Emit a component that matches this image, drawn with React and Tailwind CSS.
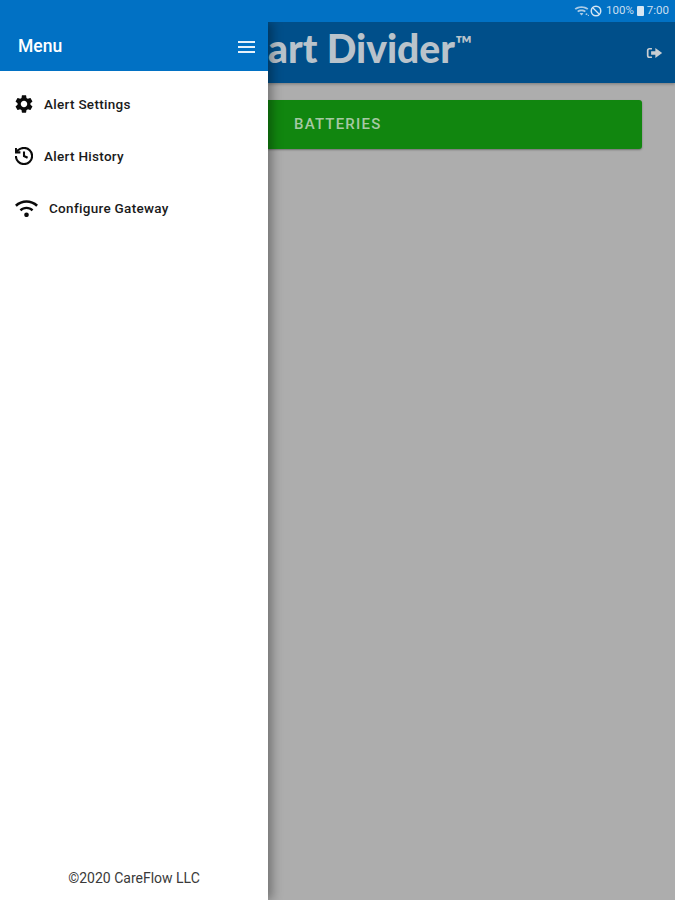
import React from "react";

const menuItems = [
    { name: "Alert Settings", icon: "gear", pad: "pl-[15px] gap-[11px]" },
    { name: "Alert History", icon: "history", pad: "pl-[15px] gap-[11px]" },
    { name: "Configure Gateway", icon: "wifi", pad: "pl-[15px] gap-[11px]" },
];

const MenuIcon = ({ type }) => {
    if (type === "gear") {
        return (
            <svg viewBox="2 2 20 20" className="w-[18px] h-[18px]" fill="#0a0a0a">
                <path d="M19.14 12.94c.04-.3.06-.61.06-.94 0-.32-.02-.64-.07-.94l2.03-1.58c.18-.14.23-.41.12-.61l-1.92-3.32c-.12-.22-.37-.29-.59-.22l-2.39.96c-.5-.38-1.03-.7-1.62-.94l-.36-2.54c-.04-.24-.24-.41-.48-.41h-3.84c-.24 0-.43.17-.47.41l-.36 2.54c-.59.24-1.13.57-1.62.94l-2.39-.96c-.22-.08-.47 0-.59.22L2.74 8.87c-.12.21-.08.47.12.61l2.03 1.58c-.05.3-.09.63-.09.94s.02.64.07.94l-2.03 1.58c-.18.14-.23.41-.12.61l1.92 3.32c.12.22.37.29.59.22l2.39-.96c.5.38 1.03.7 1.62.94l.36 2.54c.05.24.24.41.48.41h3.84c.24 0 .44-.17.47-.41l.36-2.54c.59-.24 1.13-.56 1.62-.94l2.39.96c.22.08.47 0 .59-.22l1.92-3.32c.12-.22.07-.47-.12-.61l-2.01-1.58zM12 15.6c-1.98 0-3.6-1.62-3.6-3.6s1.62-3.6 3.6-3.6 3.6 1.62 3.6 3.6-1.62 3.6-3.6 3.6z" />
            </svg>
        );
    }
    if (type === "history") {
        return (
            <svg viewBox="2 2 20 20" className="w-[18px] h-[18px]" fill="none" stroke="#0a0a0a" strokeWidth="2.3">
                <path d="M3 12a9 9 0 1 0 9-9 9.75 9.75 0 0 0-6.74 2.74L3 8" />
                <path d="M3 3v5h5" />
                <path d="M12 7v5l4 2" />
            </svg>
        );
    }
    return (
        <svg viewBox="1 4 22 17" className="w-[23px] h-[18px]" fill="#0a0a0a">
            <path d="M1 9.5l1.7 1.7c5.2-5 13.4-5 18.6 0L23 9.5C16.9 3.7 7.1 3.7 1 9.5z" />
            <path d="M5.4 13.9l1.7 1.7c2.8-2.7 7-2.7 9.8 0l1.7-1.7c-3.7-3.5-9.5-3.5-13.2 0z" />
            <circle cx="12" cy="19" r="2.2" />
        </svg>
    );
};

const StatusBar = () => (
    <div className="relative z-20 h-[22px] bg-[#0171c4] flex items-center justify-end pr-[6px] text-[#c9dff0] text-[11.5px]">
        {/* wifi with small activity dots */}
        <svg viewBox="0 0 24 18" className="w-[15px] h-[12px] mr-[1px]" fill="#a9cbe6">
            <path d="M1 5c6-5 16-5 22 0l-2 2C16 3 8 3 3 7z" />
            <path d="M5 9c4-3 10-3 14 0l-2 2c-3-2-7-2-10 0z" />
            <path d="M9 13c2-1 4-1 6 0l-3 3z" />
            <circle cx="20" cy="14" r="1.5" />
            <circle cx="23" cy="16" r="1" />
        </svg>
        <svg viewBox="0 0 24 24" className="w-[12px] h-[12px] mr-[4px]" fill="none" stroke="#d5e6f3" strokeWidth="3">
            <circle cx="12" cy="12" r="9.5" />
            <path d="M5 5l14 14" strokeWidth="2.5" />
        </svg>
        <span>100%</span>
        <div className="w-[7px] h-[10px] bg-[#d5e6f3] rounded-[1px] ml-[3px] mr-[3px]"></div>
        <span>7:00</span>
    </div>
);

const App = () => {
    return (
        <div className="w-[675px] h-[900px] overflow-hidden flex flex-col font-['Roboto',sans-serif]">
            <StatusBar />
            <div className="flex flex-grow min-h-0">
                {/* Drawer */}
                <aside className="relative z-10 w-[268px] shrink-0 bg-white flex flex-col shadow-[4px_0_10px_rgba(0,0,0,0.35)]">
                    <div className="h-[49px] bg-[#0171c4] flex items-center justify-between pl-[18px] pr-[13px] text-white">
                        <span className="text-[17.5px] font-medium">Menu</span>
                        <div className="w-[17px] flex flex-col gap-[3px]">
                            <div className="h-[2px] bg-[#e6f1fa]"></div>
                            <div className="h-[2px] bg-[#e6f1fa]"></div>
                            <div className="h-[2px] bg-[#e6f1fa]"></div>
                        </div>
                    </div>
                    <nav className="flex flex-col pt-[7px] flex-grow">
                        {menuItems.map((item) => (
                            <div key={item.name} className={`h-[52px] flex items-center ${item.pad}`}>
                                <MenuIcon type={item.icon} />
                                <span className="text-[13.5px] font-medium text-[#1a1a1a] tracking-[0.3px]">{item.name}</span>
                            </div>
                        ))}
                    </nav>
                    <div className="h-[32px] text-center text-[14px] text-[#3a3a3a]">
                        ©2020 CareFlow LLC
                    </div>
                </aside>

                {/* Main content, dimmed behind the drawer */}
                <main className="flex-grow min-w-0 bg-[#adadad] flex flex-col">
                    <header className="h-[61px] bg-[#004f8a] flex items-center justify-between pr-[12px] shadow-[0_1px_3px_rgba(0,0,0,0.3)]">
                        <span className="whitespace-nowrap font-['Lato',sans-serif] font-black text-[39px] leading-[44px] text-[#b9c3cb] pb-[9px]">
                            art Divider<span className="text-[22px] font-bold leading-none align-[11px]">™</span>
                        </span>
                        <svg viewBox="0 0 20 16" className="w-[17px] h-[14px]" fill="#c9ced2">
                            <path d="M7 2H4a3 3 0 0 0-3 3v6a3 3 0 0 0 3 3h3v-2H4a1 1 0 0 1-1-1V5a1 1 0 0 1 1-1h3z" />
                            <path d="M11 2l8 6-8 6v-4H6V6h5z" />
                        </svg>
                    </header>
                    <div className="pt-[17px] pr-[33px]">
                        <div className="h-[49px] bg-[#11860f] rounded-r-[3px] flex items-center pl-[26px] shadow-[0_1px_2px_rgba(0,0,0,0.35)]">
                            <span className="text-[15px] font-medium tracking-[1.2px] text-[#a6c9a4]">BATTERIES</span>
                        </div>
                    </div>
                </main>
            </div>
        </div>
    );
};

export default App;
